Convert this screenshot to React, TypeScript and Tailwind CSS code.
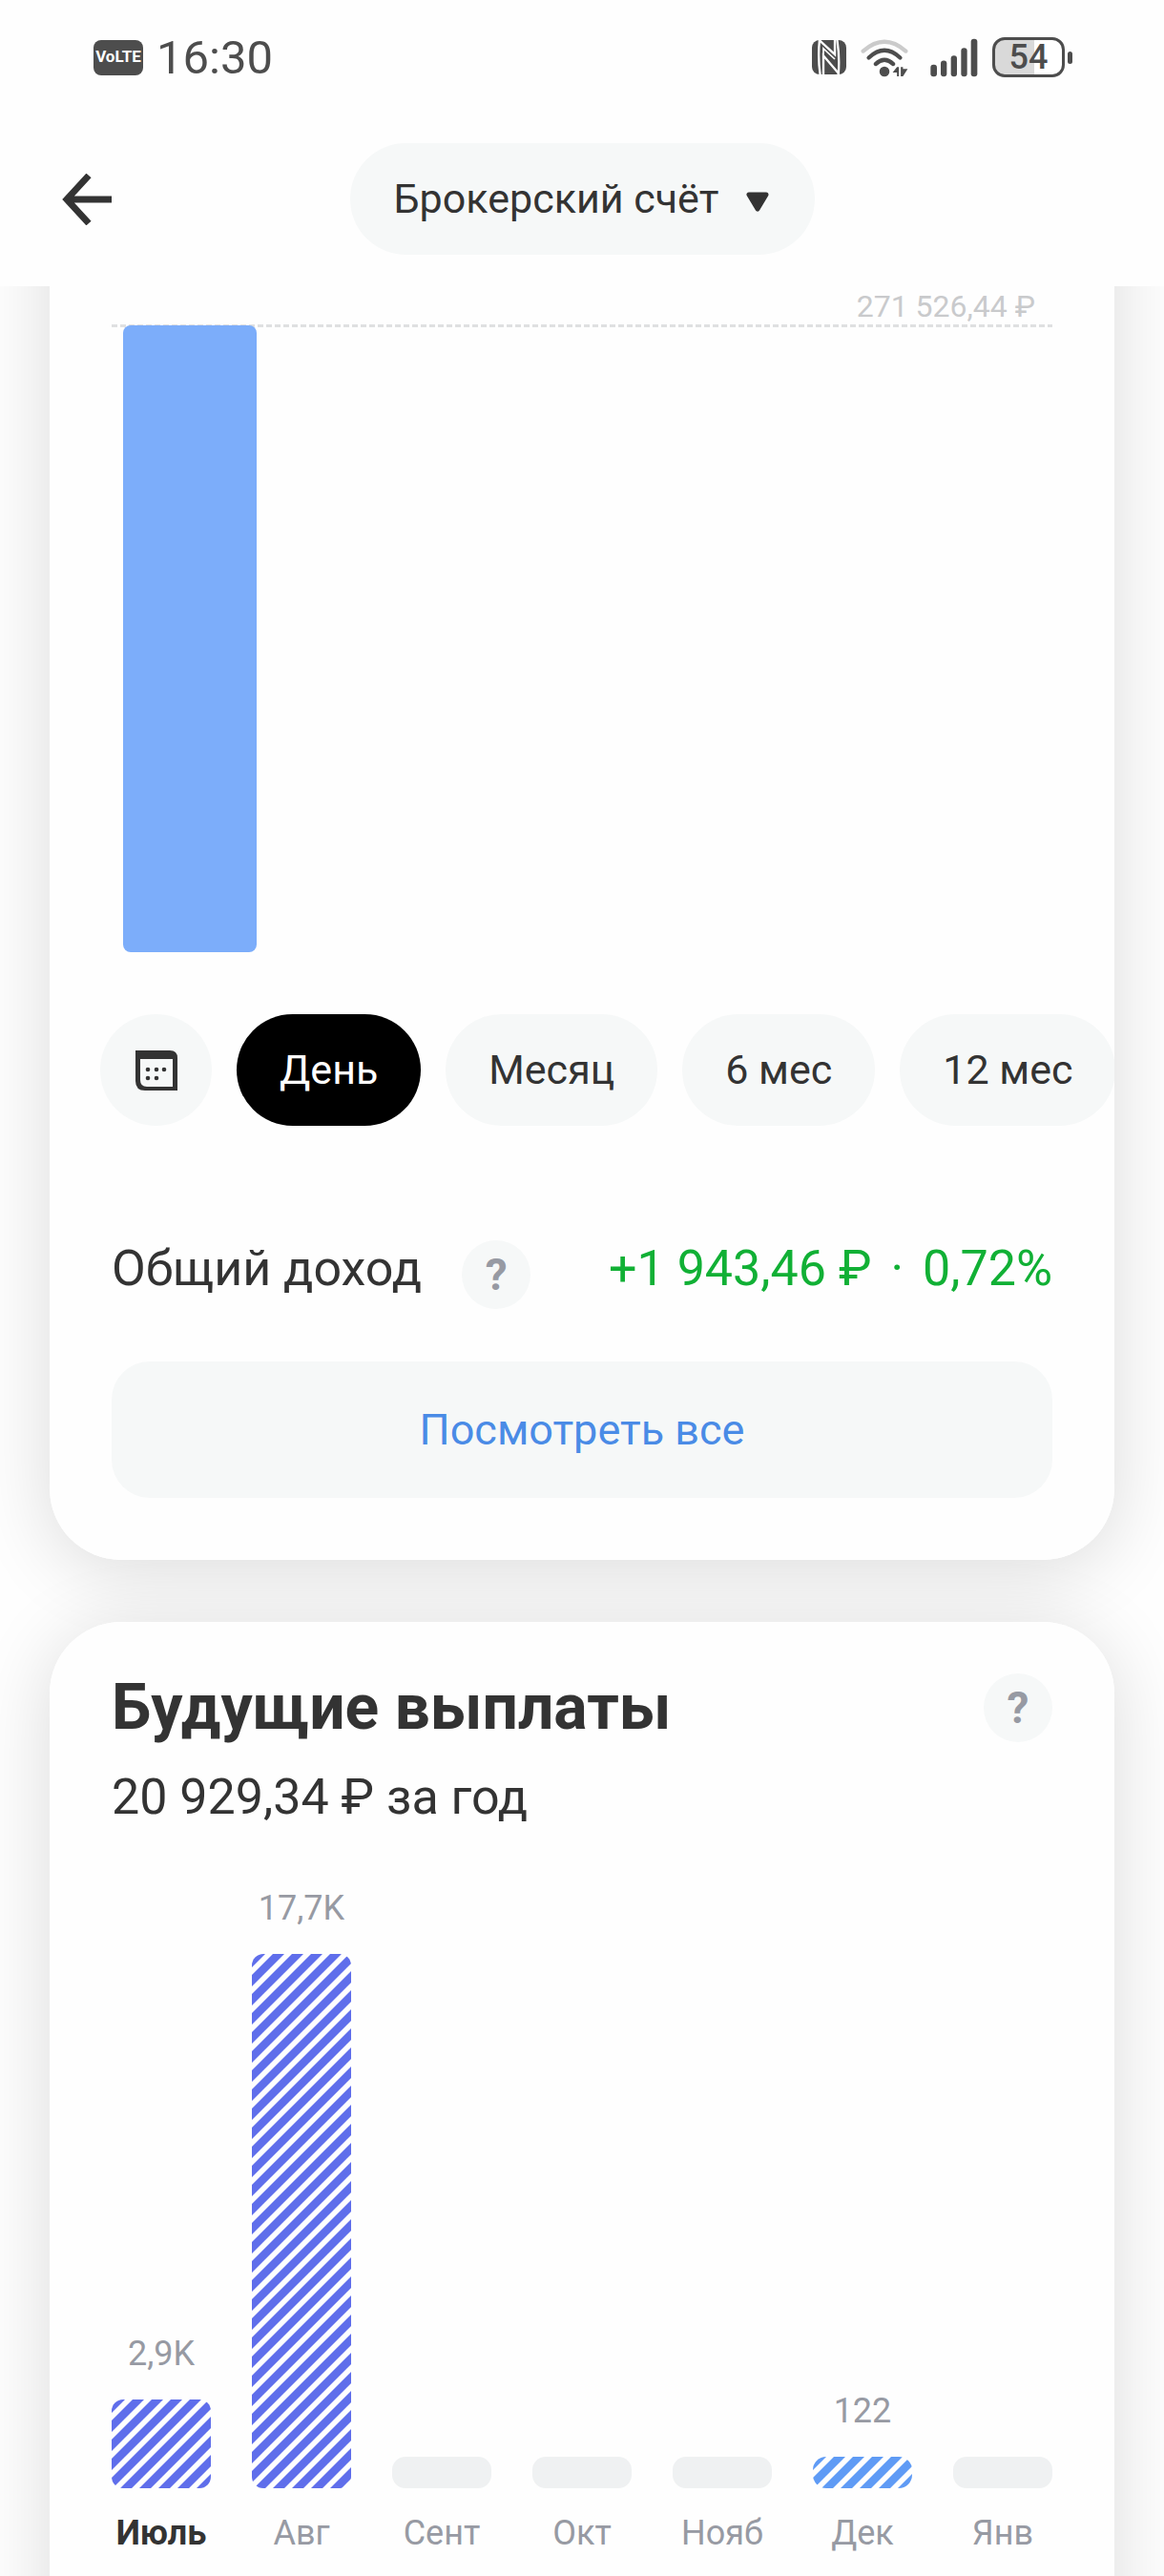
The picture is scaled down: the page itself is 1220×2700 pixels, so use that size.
import React from "react";

type Payout = { month: string; value?: string; height: number; stripe?: string; current?: boolean };

const periods = ["День", "Месяц", "6 мес", "12 мес"];

const payouts: Payout[] = [
  { month: "Июль", value: "2,9K", height: 93, stripe: "#5f6eeb", current: true },
  { month: "Авг", value: "17,7K", height: 560, stripe: "#5f6eeb" },
  { month: "Сент", height: 33 },
  { month: "Окт", height: 33 },
  { month: "Нояб", height: 33 },
  { month: "Дек", value: "122", height: 33, stripe: "#5f9bf5" },
  { month: "Янв", height: 33 },
];

function NfcIcon() {
  return (
    <svg className="h-9 w-9" viewBox="90 63 108 108" aria-hidden="true">
      <rect x="90" y="63" width="108" height="108" rx="24" fill="#4d4d4d" />
      <g fill="none" stroke="#fff" strokeWidth="7">
        <path d="M114 61 Q108 117 116 173" />
        <path d="M114 64 L162 108 V61" />
        <path d="M126 173 V112 L174 168" />
        <path d="M126 112 V90 L162 123" strokeWidth="5" />
        <path d="M169 61 Q178 117 173 173" />
      </g>
    </svg>
  );
}

function WifiIcon() {
  return (
    <svg className="h-[41px] w-[50px]" viewBox="244 56 152 122" aria-hidden="true">
      <g fill="none" strokeWidth="13" strokeLinecap="round">
        <path d="M252 96 Q320 36 388 96" stroke="#cbcbcb" />
        <path d="M270 117 Q320 70 370 117" stroke="#4d4d4d" />
        <path d="M292 137 Q320 111 348 137" stroke="#4d4d4d" />
      </g>
      <circle cx="320" cy="161" r="16" fill="#4d4d4d" />
      <path d="M346 164 L360 147 H366 V176 H360 V164Z M372 147 H379 V153 H394 L379 176 H372Z" fill="#4d4d4d" />
    </svg>
  );
}

function SignalIcon() {
  return (
    <svg className="ml-2 h-[41px] w-[50px]" viewBox="464 56 150 122" aria-hidden="true">
      <g fill="#4d4d4d">
        <rect x="465" y="139" width="20" height="37" rx="9" />
        <rect x="497" y="126" width="19" height="50" rx="9" />
        <rect x="529" y="110" width="19" height="66" rx="9" />
        <rect x="561" y="86" width="19" height="90" rx="9" />
        <rect x="592" y="58" width="20" height="118" rx="9" />
      </g>
    </svg>
  );
}

function StatusBar() {
  return (
    <div className="flex h-[120px] items-center justify-between pr-24 pl-[98px] text-[#4d4d4d]">
      <div className="flex items-center gap-[14px]">
        <span className="flex h-[37px] w-[52px] items-center justify-center rounded-lg bg-[#4d4d4d] text-[17px] font-bold text-white">
          VoLTE
        </span>
        <span className="text-[49px] leading-none">16:30</span>
      </div>
      <div className="flex items-center gap-[15px]">
        <NfcIcon />
        <WifiIcon />
        <SignalIcon />
        <div className="flex items-center gap-[3px]">
          <span className="flex h-[42px] w-[76px] items-center justify-center rounded-[13px] border-3 border-[#4d4d4d] bg-[linear-gradient(90deg,#d9d9d9_58%,#ffffff_58%)] text-[36px] leading-none font-medium">
            54
          </span>
          <span className="h-[13px] w-[5px] rounded-full bg-[#4d4d4d]" />
        </div>
      </div>
    </div>
  );
}

function Toolbar() {
  return (
    <div className="grid h-[180px] grid-cols-[1fr_auto_1fr] items-start px-[65px] pt-[30px]">
      <button type="button" aria-label="Назад" className="flex h-[117px] w-[52px] items-center">
        <svg className="h-[54px] w-[52px]" viewBox="0 0 52 54" fill="none" stroke="#333333" strokeWidth="7" aria-hidden="true">
          <path d="M28 2 L5 27 L28 52 M5 27 H52" />
        </svg>
      </button>
      <div className="relative">
        <select
          aria-label="Счёт"
          className="h-[117px] appearance-none rounded-full bg-[#f6f8f8] pr-[100px] pl-[46px] text-[43px] font-[450] text-[#333333]"
        >
          <option>Брокерский счёт</option>
        </select>
        <svg className="pointer-events-none absolute top-[51px] right-12 h-[22px] w-6" viewBox="0 0 24 22" aria-hidden="true">
          <path d="M3 3 H21 L12 18Z" fill="#333333" stroke="#333333" strokeWidth="5" strokeLinejoin="round" />
        </svg>
      </div>
    </div>
  );
}

function CalendarIcon() {
  return (
    <svg className="h-[42px] w-[44px]" viewBox="0 0 44 42" aria-hidden="true">
      <path
        fillRule="evenodd"
        fill="#333333"
        d="M0 0 H36 Q44 0 44 8 V42 H10 Q0 42 0 32Z M5 9 V31 Q5 38 12 38 H39 V9Z"
      />
      <g fill="#333333">
        <circle cx="13" cy="20" r="2.3" />
        <circle cx="22" cy="20" r="2.3" />
        <circle cx="30" cy="20" r="2.3" />
        <circle cx="13" cy="29" r="2.3" />
        <circle cx="22" cy="29" r="2.3" />
      </g>
    </svg>
  );
}

function HelpButton() {
  return (
    <button
      type="button"
      aria-label="Подсказка"
      className="flex size-[72px] shrink-0 items-center justify-center rounded-full bg-[#f6f8f8] text-[46px] leading-none font-bold text-[#979aa3]"
    >
      ?
    </button>
  );
}

function IncomeCard() {
  return (
    <section className="-mt-[120px] rounded-b-[75px] shadow-[0_10px_80px_rgba(0,0,0,0.14)]">
      <div className="relative z-10 rounded-b-[75px] bg-[#fefefe] pt-[120px] pb-[65px]">
        <div className="px-[65px]">
          <p className="pr-[18px] text-right text-[32px] leading-[42px] text-[#c9cacc]">271 526,44 ₽</p>
          <div className="-mt-0.5 h-[3px] bg-[repeating-linear-gradient(90deg,#dfe0e1_0_6px,transparent_6px_9px)]" />
          <div className="-mt-0.5 ml-3 h-[657px] w-[140px] rounded-lg bg-[#7cadfa]" />
        </div>

        <div className="mt-[65px] flex gap-[26px] overflow-hidden pl-[53px] text-[43px] font-[450] text-[#333333]">
          <button
            type="button"
            aria-label="Выбрать даты"
            className="flex size-[117px] shrink-0 items-center justify-center rounded-full bg-[#f6f8f8]"
          >
            <CalendarIcon />
          </button>
          {periods.map((p, i) => (
            <button
              key={p}
              type="button"
              aria-pressed={i === 0}
              className={
                i === 0
                  ? "h-[117px] shrink-0 rounded-full bg-black px-[45px] text-white"
                  : "h-[117px] shrink-0 rounded-full bg-[#f6f8f8] px-[45px]"
              }
            >
              {p}
            </button>
          ))}
        </div>

        <div className="mt-[120px] flex items-start justify-between px-[65px] text-[52px] leading-[60px]">
          <div className="flex items-start gap-[42px]">
            <span className="text-[#333333]">Общий доход</span>
            <HelpButton />
          </div>
          <div className="flex gap-5 text-[#11b035]">
            <span>+1 943,46 ₽</span>
            <span>·</span>
            <span>0,72%</span>
          </div>
        </div>

        <div className="mt-[55px] px-[65px]">
          <button type="button" className="h-[143px] w-full rounded-[40px] bg-[#f6f8f8] text-[45px] text-[#4a8be6]">
            Посмотреть все
          </button>
        </div>
      </div>
    </section>
  );
}

function PayoutBar({ height, stripe, id }: { height: number; stripe?: string; id: string }) {
  if (!stripe) return <div className="rounded-[14px] bg-[#eff1f2]" style={{ height }} />;
  return (
    <svg
      className={height > 40 ? "w-full rounded-xl" : "w-full rounded-[14px]"}
      style={{ height }}
      aria-hidden="true"
    >
      <pattern id={id} width="20" height="20" patternUnits="userSpaceOnUse">
        <path d="M2 0 H14 L0 14 V2Z M20 2 V14 L14 20 H2Z" fill={stripe} />
      </pattern>
      <rect width="100%" height="100%" fill={`url(#${id})`} />
    </svg>
  );
}

function PayoutsCard() {
  return (
    <section className="-mb-[120px] flex flex-1 flex-col rounded-t-[75px] shadow-[0_10px_80px_rgba(0,0,0,0.14)]">
      <div className="relative z-10 flex-1 rounded-t-[75px] bg-[#fefefe] px-[65px] pt-[54px] pb-[140px] text-[#333333]">
        <div className="flex h-[72px] items-center justify-between">
          <h2 className="text-[66px] leading-none font-bold">Будущие выплаты</h2>
          <HelpButton />
        </div>
        <p className="mt-7 text-[52px] leading-[60px]">20 929,34 ₽ за год</p>

        <ul className="mt-[62px] flex items-end gap-[43px] text-center text-[36px] leading-[48px] text-[#979aa3]">
          {payouts.map((p, i) => (
            <li key={p.month} className="flex min-w-0 flex-1 flex-col">
              {p.value && <span className="mb-6">{p.value}</span>}
              <PayoutBar height={p.height} stripe={p.stripe} id={`stripes-${i}`} />
              <span className={p.current ? "mt-[23px] font-bold text-[#333333]" : "mt-[23px]"}>{p.month}</span>
            </li>
          ))}
        </ul>
      </div>
    </section>
  );
}

export default function App() {
  return (
    <div className="flex min-h-screen flex-col bg-[#fefefe] font-['Roboto',sans-serif]">
      <header className="relative z-20 bg-[#fefefe]">
        <StatusBar />
        <Toolbar />
      </header>
      <main className="flex flex-1 flex-col gap-[65px] overflow-hidden px-[52px]">
        <IncomeCard />
        <PayoutsCard />
      </main>
    </div>
  );
}
